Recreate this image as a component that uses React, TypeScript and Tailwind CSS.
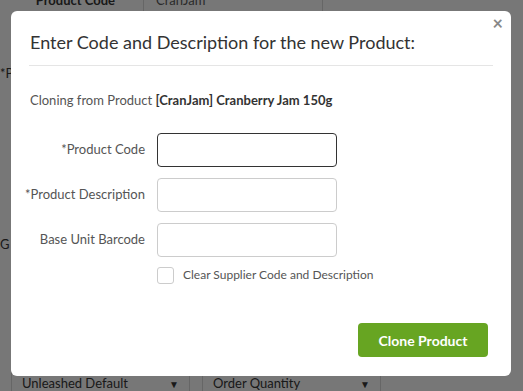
import { useState } from "react";

export default function App() {
  const [clear, setClear] = useState(false);

  return (
    <div className="relative h-[391px] w-[523px] overflow-hidden bg-[#eeeeee] font-['Lato',sans-serif] text-[#333]">
      {/* Page behind the modal */}
      <div className="flex h-full flex-col">
        <div className="-mt-[14px] flex h-[30px] items-center">
          <div className="w-[144px] border-r border-[#ccc] pr-[28px] text-right text-[13px] font-bold">
            Product Code
          </div>
          <div className="w-[179px] border-r border-[#ccc] pl-[12px] text-[13px] text-[#555]">
            CranJam
          </div>
        </div>
        <div className="mt-[48px] text-[13px]">*P</div>
        <div className="mt-[151px] text-[13px]">G</div>
        <div className="mt-auto flex h-[20px] items-start gap-[12px] pl-[11px]">
          <div className="flex h-[26px] w-[179px] items-center justify-between border-x border-[#ccc] pl-[10px] pr-[10px] text-[13px]">
            <span>Unleashed Default</span>
            <span className="text-[10px]">▼</span>
          </div>
          <div className="flex h-[26px] w-[179px] items-center justify-between border-x border-[#ccc] pl-[10px] pr-[10px] text-[13px]">
            <span>Order Quantity</span>
            <span className="text-[10px]">▼</span>
          </div>
        </div>
      </div>

      {/* Overlay + modal */}
      <div className="absolute inset-0 bg-black/50 pl-[11px] pt-[11px]">
        <div className="relative flex h-[365px] w-[500px] flex-col rounded-[6px] bg-white">
          <button className="absolute right-[8px] top-[3px] text-[18px] font-bold leading-none text-[#888]">
            ×
          </button>

          <div className="mx-[18px] border-b border-[#e5e5e5] pb-[12px] pt-[21px]">
            <h2 className="pl-[1px] text-[18px] leading-[21px] text-[#333]">
              Enter Code and Description for the new Product:
            </h2>
          </div>

          <div className="px-[19px] pt-[26px] text-[13px] leading-[16px] text-[#555]">
            Cloning from Product{" "}
            <span className="font-bold text-[#333]">[CranJam] Cranberry Jam 150g</span>
          </div>

          <div className="mt-[25px] flex flex-col gap-[11px] text-[13px] text-[#555]">
            <div className="flex items-center">
              <label className="w-[134px] text-right">*Product Code</label>
              <input className="ml-[12px] h-[34px] w-[180px] rounded-[4px] border border-[#333] px-2 outline-none" />
            </div>
            <div className="flex items-center">
              <label className="w-[134px] text-right">*Product Description</label>
              <input className="ml-[12px] h-[34px] w-[180px] rounded-[4px] border border-[#ccc] px-2 outline-none" />
            </div>
            <div className="flex items-center">
              <label className="w-[134px] text-right">Base Unit Barcode</label>
              <input className="ml-[12px] h-[34px] w-[180px] rounded-[4px] border border-[#ccc] px-2 outline-none" />
            </div>
          </div>

          <label className="ml-[146px] mt-[9px] flex items-center gap-[9px] text-[12px] text-[#555]">
            <span
              onClick={() => setClear(!clear)}
              className="flex h-[17px] w-[17px] items-center justify-center rounded-[3px] border border-[#ccc] text-[11px]"
            >
              {clear ? "✓" : ""}
            </span>
            Clear Supplier Code and Description
          </label>

          <div className="mt-auto flex justify-end pb-[19px] pr-[23px]">
            <button className="h-[34px] w-[130px] rounded-[4px] bg-[#67a522] text-[14px] font-bold text-white">
              Clone Product
            </button>
          </div>
        </div>
      </div>
    </div>
  );
}
